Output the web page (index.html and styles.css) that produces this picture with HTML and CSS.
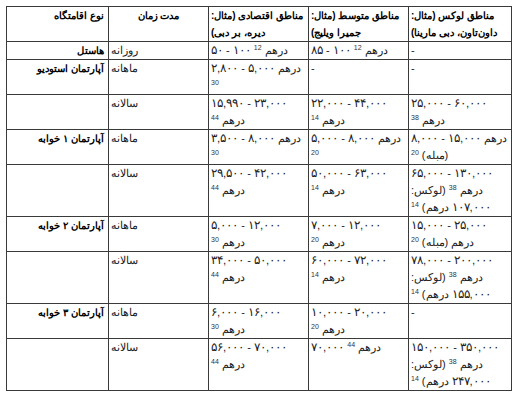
FILE: index.html
```html
<!DOCTYPE html>
<html lang="fa">
<head>
<meta charset="utf-8">
<title>هزینه اقامت در دبی</title>
<link rel="stylesheet" href="styles.css">
</head>
<body>
<table class="rates">
  <colgroup>
    <col class="c-type"><col class="c-dur"><col class="c-area"><col class="c-area"><col class="c-lux">
  </colgroup>
  <thead>
    <tr>
      <th class="type">نوع اقامتگاه</th>
      <th class="dur">مدت زمان</th>
      <th class="area">مناطق اقتصادی (مثال: دیره، بر دبی)</th>
      <th class="area">مناطق متوسط (مثال: جمیرا ویلیج)</th>
      <th class="area">مناطق لوکس (مثال: داون‌تاون، دبی مارینا)</th>
    </tr>
  </thead>
  <tbody>
    <tr>
      <td class="type">هاستل</td>
      <td>روزانه</td>
      <td><span class="n">۵۰</span> - <span class="n">۱۰۰</span> درهم <sup class="fn">12</sup></td>
      <td><span class="n">۸۵</span> - <span class="n">۱۰۰</span> درهم <sup class="fn">12</sup></td>
      <td>-</td>
    </tr>
    <tr>
      <td class="type">آپارتمان استودیو</td>
      <td>ماهانه</td>
      <td><span class="n">۲,۸۰۰</span> - <span class="n">۵,۰۰۰</span> درهم <sup class="fn">30</sup></td>
      <td>-</td>
      <td>-</td>
    </tr>
    <tr>
      <td class="type"></td>
      <td>سالانه</td>
      <td><span class="n">۱۵,۹۹۰</span> - <span class="n">۲۳,۰۰۰</span> درهم <sup class="fn">44</sup></td>
      <td><span class="n">۲۲,۰۰۰</span> - <span class="n">۴۴,۰۰۰</span> درهم <sup class="fn">14</sup></td>
      <td><span class="n">۲۵,۰۰۰</span> - <span class="n">۶۰,۰۰۰</span> درهم <sup class="fn">38</sup></td>
    </tr>
    <tr>
      <td class="type">آپارتمان ۱ خوابه</td>
      <td>ماهانه</td>
      <td><span class="n">۳,۵۰۰</span> - <span class="n">۸,۰۰۰</span> درهم <sup class="fn">30</sup></td>
      <td><span class="n">۵,۰۰۰</span> - <span class="n">۸,۰۰۰</span> درهم <sup class="fn">20</sup></td>
      <td><span class="n">۸,۰۰۰</span> - <span class="n">۱۵,۰۰۰</span> درهم (مبله) <sup class="fn">20</sup></td>
    </tr>
    <tr>
      <td class="type"></td>
      <td>سالانه</td>
      <td><span class="n">۲۹,۵۰۰</span> - <span class="n">۴۲,۰۰۰</span> درهم <sup class="fn">44</sup></td>
      <td><span class="n">۵۰,۰۰۰</span> - <span class="n">۶۳,۰۰۰</span> درهم <sup class="fn">14</sup></td>
      <td><span class="n">۶۵,۰۰۰</span> - <span class="n">۱۳۰,۰۰۰</span> درهم <sup class="fn">38</sup> (لوکس: <span class="n">۱۰۷,۰۰۰</span> درهم) <sup class="fn">14</sup></td>
    </tr>
    <tr>
      <td class="type">آپارتمان ۲ خوابه</td>
      <td>ماهانه</td>
      <td><span class="n">۵,۰۰۰</span> - <span class="n">۱۲,۰۰۰</span> درهم <sup class="fn">30</sup></td>
      <td><span class="n">۷,۰۰۰</span> - <span class="n">۱۲,۰۰۰</span> درهم <sup class="fn">20</sup></td>
      <td><span class="n">۱۵,۰۰۰</span> - <span class="n">۲۵,۰۰۰</span> درهم (مبله) <sup class="fn">20</sup></td>
    </tr>
    <tr>
      <td class="type"></td>
      <td>سالانه</td>
      <td><span class="n">۳۴,۰۰۰</span> - <span class="n">۵۰,۰۰۰</span> درهم <sup class="fn">44</sup></td>
      <td><span class="n">۶۰,۰۰۰</span> - <span class="n">۷۲,۰۰۰</span> درهم <sup class="fn">14</sup></td>
      <td><span class="n">۷۸,۰۰۰</span> - <span class="n">۲۰۰,۰۰۰</span> درهم <sup class="fn">38</sup> (لوکس: <span class="n">۱۵۵,۰۰۰</span> درهم) <sup class="fn">14</sup></td>
    </tr>
    <tr>
      <td class="type">آپارتمان ۳ خوابه</td>
      <td>ماهانه</td>
      <td><span class="n">۶,۰۰۰</span> - <span class="n">۱۶,۰۰۰</span> درهم <sup class="fn">30</sup></td>
      <td><span class="n">۱۰,۰۰۰</span> - <span class="n">۲۰,۰۰۰</span> درهم <sup class="fn">20</sup></td>
      <td>-</td>
    </tr>
    <tr>
      <td class="type"></td>
      <td>سالانه</td>
      <td><span class="n">۵۶,۰۰۰</span> - <span class="n">۷۰,۰۰۰</span> درهم <sup class="fn">44</sup></td>
      <td><span class="n">۷۰,۰۰۰</span> درهم <sup class="fn">44</sup></td>
      <td><span class="n">۱۵۰,۰۰۰</span> - <span class="n">۳۵۰,۰۰۰</span> درهم <sup class="fn">38</sup> (لوکس: <span class="n">۲۴۷,۰۰۰</span> درهم) <sup class="fn">14</sup></td>
    </tr>
  </tbody>
</table>
</body>
</html>
```

FILE: styles.css
```css
html, body {
  background: #ffffff;
}
body {
  margin: 6px;
  font-family: "Liberation Sans", Arial, sans-serif;
  font-size: 10px;
  color: #111;
}
.rates {
  border-collapse: collapse;
  table-layout: fixed;
  width: 505px;
}
.c-type { width: 102px; }
.c-dur { width: 100px; }
.c-area { width: 100px; }
.c-lux { width: 103px; }
.rates th,
.rates td {
  border: 1px solid #3a3a3a;
  padding: 0 2px;
  line-height: 17px;
  vertical-align: top;
  text-align: left;
}
.rates td {
  font-size: 11px;
  color: #222;
}
.rates th {
  font-size: 10px;
  font-weight: bold;
  color: #000;
}
.rates .type {
  font-size: 10px;
  text-align: right;
  font-weight: bold;
  color: #000;
  padding-right: 4px;
}
.rates th.dur {
  text-align: center;
}
.n {
  font-size: 11.5px;
  line-height: 1;
}
.fn {
  font-family: "Liberation Sans", Arial, sans-serif;
  font-size: 7px;
  line-height: 0;
  vertical-align: 4px;
  color: #333;
}
```
